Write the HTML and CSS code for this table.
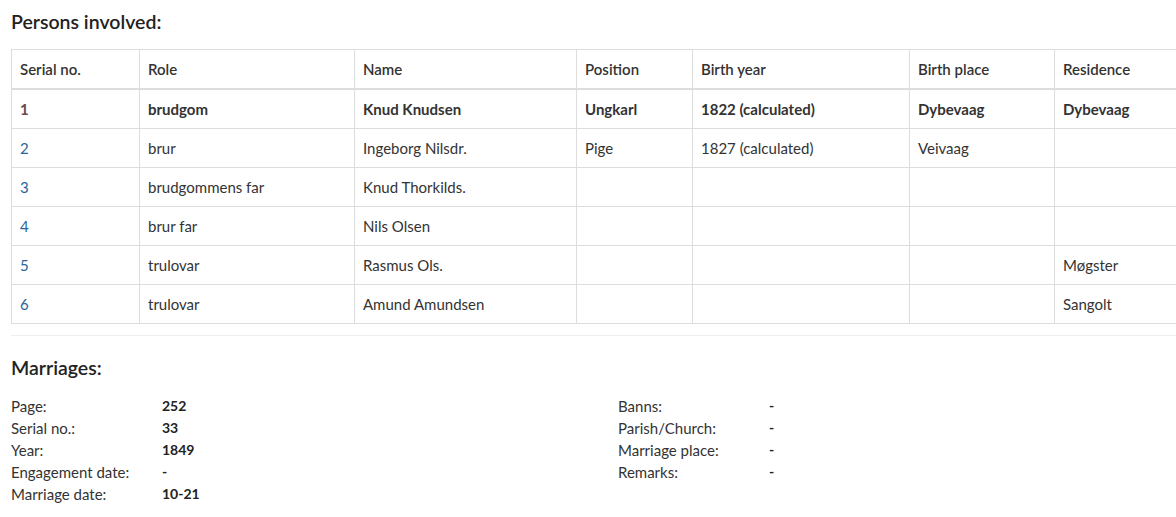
FILE: index.html
```html
<!DOCTYPE html>
<html>
<head>
<meta charset="utf-8">
<link rel="stylesheet" href="styles.css">
</head>
<body>
<div class="page">
  <h3 class="section-title">Persons involved:</h3>
  <div class="table-wrap">
    <table class="persons">
      <colgroup>
        <col class="c1"><col class="c2"><col class="c3"><col class="c4"><col class="c5"><col class="c6"><col class="c7">
      </colgroup>
      <thead>
        <tr><th>Serial no.</th><th>Role</th><th>Name</th><th>Position</th><th>Birth year</th><th>Birth place</th><th>Residence</th></tr>
      </thead>
      <tbody>
        <tr class="main"><td><a class="visited" href="#">1</a></td><td>brudgom</td><td>Knud Knudsen</td><td>Ungkarl</td><td>1822 (calculated)</td><td>Dybevaag</td><td>Dybevaag</td></tr>
        <tr><td><a href="#">2</a></td><td>brur</td><td>Ingeborg Nilsdr.</td><td>Pige</td><td>1827 (calculated)</td><td>Veivaag</td><td></td></tr>
        <tr><td><a href="#">3</a></td><td>brudgommens far</td><td>Knud Thorkilds.</td><td></td><td></td><td></td><td></td></tr>
        <tr><td><a href="#">4</a></td><td>brur far</td><td>Nils Olsen</td><td></td><td></td><td></td><td></td></tr>
        <tr><td><a href="#">5</a></td><td>trulovar</td><td>Rasmus Ols.</td><td></td><td></td><td></td><td>Møgster</td></tr>
        <tr><td><a href="#">6</a></td><td>trulovar</td><td>Amund Amundsen</td><td></td><td></td><td></td><td>Sangolt</td></tr>
      </tbody>
    </table>
  </div>

  <h3 class="section-title marriages-title">Marriages:</h3>
  <div class="facts">
    <dl class="fact-list">
      <div class="fact"><dt>Page:</dt><dd>252</dd></div>
      <div class="fact"><dt>Serial no.:</dt><dd>33</dd></div>
      <div class="fact"><dt>Year:</dt><dd>1849</dd></div>
      <div class="fact"><dt>Engagement date:</dt><dd>-</dd></div>
      <div class="fact"><dt>Marriage date:</dt><dd>10-21</dd></div>
    </dl>
    <dl class="fact-list">
      <div class="fact"><dt>Banns:</dt><dd>-</dd></div>
      <div class="fact"><dt>Parish/Church:</dt><dd>-</dd></div>
      <div class="fact"><dt>Marriage place:</dt><dd>-</dd></div>
      <div class="fact"><dt>Remarks:</dt><dd>-</dd></div>
    </dl>
  </div>
</div>
</body>
</html>
```

FILE: styles.css
```css
html, body {
  margin: 0;
  padding: 0;
  background: #fff;
  overflow: hidden;
}
body {
  font-family: "Lato", "Liberation Sans", sans-serif;
  color: #333;
  font-size: 15px;
}
.page {
  padding: 0 0 0 11px;
}
.section-title {
  margin: 0;
  padding-top: 10px;
  font-size: 19.5px;
  line-height: 24px;
  font-weight: 600;
  color: #222;
}
.table-wrap {
  margin-top: 15px;
  padding-bottom: 11px;
  border-bottom: 1px solid #eee;
  overflow: hidden;
}
.persons {
  border-collapse: collapse;
  table-layout: fixed;
  width: 1250px;
}
.c1 { width: 128px; }
.c2 { width: 215px; }
.c3 { width: 222px; }
.c4 { width: 116px; }
.c5 { width: 217px; }
.c6 { width: 145px; }
.c7 { width: 207px; }
.persons th, .persons td {
  border: 1px solid #ddd;
  padding: 8px 8px;
  line-height: 22px;
  text-align: left;
  vertical-align: top;
  white-space: nowrap;
}
.persons th {
  font-weight: 600;
  color: #333;
  border-bottom: 2px solid #ddd;
}
.persons tr.main td {
  font-weight: 700;
}
.persons a {
  color: #2a6496;
  text-decoration: none;
}
.persons a.visited {
  color: #6b4a4a;
}
.marriages-title {
  padding-top: 20px;
}
.facts {
  display: flex;
  margin-top: 15px;
}
.fact-list {
  margin: 0;
  width: 607px;
  flex-shrink: 0;
}
.fact {
  display: flex;
  line-height: 22px;
  font-size: 15px;
}
.fact dt {
  width: 151px;
  color: #333;
}
.fact dd {
  margin: 0;
  font-size: 14px;
  font-weight: 700;
  color: #222;
}
```
